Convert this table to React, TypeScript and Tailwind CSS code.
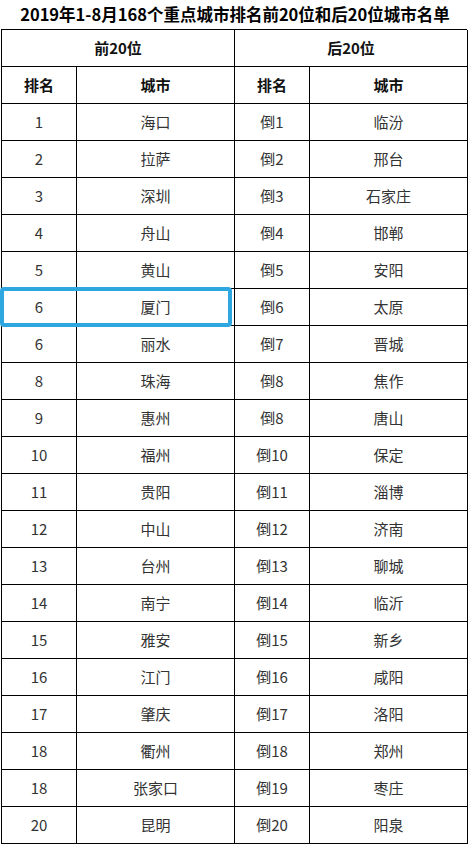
import React from "react";

const rows: [string, string, string, string][] = [
  ["1", "海口", "倒1", "临汾"],
  ["2", "拉萨", "倒2", "邢台"],
  ["3", "深圳", "倒3", "石家庄"],
  ["4", "舟山", "倒4", "邯郸"],
  ["5", "黄山", "倒5", "安阳"],
  ["6", "厦门", "倒6", "太原"],
  ["6", "丽水", "倒7", "晋城"],
  ["8", "珠海", "倒8", "焦作"],
  ["9", "惠州", "倒8", "唐山"],
  ["10", "福州", "倒10", "保定"],
  ["11", "贵阳", "倒11", "淄博"],
  ["12", "中山", "倒12", "济南"],
  ["13", "台州", "倒13", "聊城"],
  ["14", "南宁", "倒14", "临沂"],
  ["15", "雅安", "倒15", "新乡"],
  ["16", "江门", "倒16", "咸阳"],
  ["17", "肇庆", "倒17", "洛阳"],
  ["18", "衢州", "倒18", "郑州"],
  ["18", "张家口", "倒19", "枣庄"],
  ["20", "昆明", "倒20", "阳泉"],
];

const font = { fontFamily: '"Noto Sans CJK SC", "Noto Sans", sans-serif' };

export default function App() {
  return (
    <div className="w-[470px] h-[847px] bg-white overflow-hidden" style={font}>
      <div className="h-[28px] flex items-center justify-center text-[16.5px] font-bold text-black leading-none pt-[1px]">
        2019年1-8月168个重点城市排名前20位和后20位城市名单
      </div>
      <div className="relative ml-[1px] mt-[1px] w-[466px]">
        <div className="grid grid-cols-[75px_158px_75px_158px] border-l border-t border-black">
          <div className="col-span-2 h-[37px] border-r border-b border-black flex items-center justify-center text-[15px] font-bold text-[#111]">
            前20位
          </div>
          <div className="col-span-2 h-[37px] border-r border-b border-black flex items-center justify-center text-[15px] font-bold text-[#111]">
            后20位
          </div>
          {["排名", "城市", "排名", "城市"].map((h, i) => (
            <div
              key={i}
              className="h-[37px] border-r border-b border-black flex items-center justify-center text-[15px] font-bold text-[#111]"
            >
              {h}
            </div>
          ))}
          {rows.map((r, ri) =>
            r.map((c, ci) => (
              <div
                key={ri + "-" + ci}
                className="h-[37px] border-r border-b border-black flex items-center justify-center text-[15px] text-[#333]"
              >
                {c}
              </div>
            ))
          )}
        </div>
        <div className="absolute left-[-1px] top-[258px] w-[232px] h-[40px] border-[4px] border-[#2ea6df] rounded-[4px]" />
      </div>
    </div>
  );
}
